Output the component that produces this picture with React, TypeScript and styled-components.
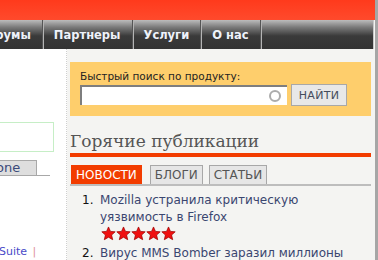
import React from 'react'
import styled, { createGlobalStyle } from 'styled-components'

const GlobalStyle = createGlobalStyle`
  html, body {
    margin: 0;
    padding: 0;
    background: #f4f4f2;
  }
  body {
    font-family: 'DejaVu Sans', Verdana, sans-serif;
  }
`

const navItems = ['Форумы', 'Партнеры', 'Услуги', 'О нас']
const tabs = ['Новости', 'Блоги', 'Статьи']

const Star = () => (
  <svg width="15" height="15" viewBox="0 0 24 24">
    <path
      d="M12 1.5l3.1 7.1 7.6.7-5.8 5.1 1.8 7.5L12 17.9l-6.7 4 1.8-7.5-5.8-5.1 7.6-.7z"
      fill="#f01010"
      stroke="#a00000"
      strokeWidth="1.2"
      strokeLinejoin="round"
    />
  </svg>
)

const App = () => {
  return (
    <>
      <GlobalStyle />
      <StyledPage>
        <StyledHeader />
        <StyledNav>
          {navItems.map((item, i) => (
            <StyledNavItem key={item} $first={i === 0}>
              {item}
            </StyledNavItem>
          ))}
        </StyledNav>
        <StyledContent>
          <StyledLeft>
            <StyledGreenBox />
            <StyledTabLine>
              <StyledSmallTab>one</StyledSmallTab>
            </StyledTabLine>
            <StyledSuite>
              Suite <span>|</span>
            </StyledSuite>
          </StyledLeft>
          <StyledMain>
            <StyledSearch>
              <StyledLabel>Быстрый поиск по продукту:</StyledLabel>
              <StyledSearchRow>
                <StyledInputWrap>
                  <StyledInput type="text" />
                  <StyledRing />
                </StyledInputWrap>
                <StyledButton>НАЙТИ</StyledButton>
              </StyledSearchRow>
            </StyledSearch>
            <StyledTitle>Горячие публикации</StyledTitle>
            <StyledTabs>
              {tabs.map((t, i) => (
                <StyledTab key={t} $active={i === 0}>
                  {t}
                </StyledTab>
              ))}
            </StyledTabs>
            <StyledList>
              <StyledItem>
                <StyledNum>1.</StyledNum>
                <div>
                  <StyledLink>
                    Mozilla устранила критическую
                    <br />
                    уязвимость в Firefox
                  </StyledLink>
                  <StyledStars>
                    <Star />
                    <Star />
                    <Star />
                    <Star />
                    <Star />
                  </StyledStars>
                </div>
              </StyledItem>
              <StyledItem>
                <StyledNum>2.</StyledNum>
                <StyledLink>Вирус MMS Bomber заразил миллионы</StyledLink>
              </StyledItem>
            </StyledList>
          </StyledMain>
        </StyledContent>
      </StyledPage>
    </>
  )
}

const StyledPage = styled.div`
  width: 375px;
  height: 260px;
  border-right: 3px solid #a6a6a6;
  display: flex;
  flex-direction: column;
  overflow: hidden;
`

const StyledHeader = styled.div`
  height: 20px;
  flex-shrink: 0;
  background: linear-gradient(#ff3a1c, #ff4a2c);
`

const StyledNav = styled.div`
  height: 29px;
  flex-shrink: 0;
  display: flex;
  width: 374px;
  box-sizing: border-box;
  border-right: 1px solid #c8c8c8;
  background: linear-gradient(#bcbcbc 0%, #7a7a7a 25%, #3a3a3a 55%, #333 100%);
  overflow: hidden;
`

const StyledNavItem = styled.div<{ $first?: boolean }>`
  display: flex;
  align-items: center;
  padding: 0 12px 0 10px;
  margin-left: ${(p) => (p.$first ? '-34px' : '0')};
  border-right: 1px solid #b4b4b4;
  box-shadow: inset -1px 0 0 #555;
  color: #eef2fa;
  font-weight: bold;
  font-size: 11.5px;
  white-space: nowrap;
`

const StyledContent = styled.div`
  flex: 1;
  display: flex;
`

const StyledLeft = styled.div`
  width: 66px;
  flex-shrink: 0;
  background: #fff;
  border-right: 1px dotted #cfcfcf;
  display: flex;
  flex-direction: column;
`

const StyledGreenBox = styled.div`
  margin-top: 73px;
  width: 54px;
  height: 30px;
  box-sizing: border-box;
  border: 1px solid #c6eec6;
  border-left: none;
`

const StyledTabLine = styled.div`
  margin-top: 8px;
  width: 50px;
  border-bottom: 1px solid #a8a8a8;
  display: flex;
`

const StyledSmallTab = styled.div`
  width: 37px;
  height: 15px;
  box-sizing: border-box;
  background: #dedede;
  border: 1px solid #a8a8a8;
  border-left: none;
  border-bottom: none;
  color: #3a4a7a;
  font-size: 13px;
  line-height: 14px;
  text-indent: -4px;
`

const StyledSuite = styled.div`
  margin-top: 69px;
  font-size: 11px;
  color: #4a4ac8;
  text-indent: -1px;

  span {
    color: #e0909a;
    margin-left: 2px;
  }
`

const StyledMain = styled.div`
  flex: 1;
  background: #f4f4f2;
  padding: 13px 4px 0 3px;
  display: flex;
  flex-direction: column;
`

const StyledSearch = styled.div`
  background: #fece6c;
  height: 54px;
  box-sizing: border-box;
  padding: 8px 10px 0 10px;
`

const StyledLabel = styled.div`
  font-size: 10.5px;
  line-height: 12px;
  color: #222;
`

const StyledSearchRow = styled.div`
  margin-top: 2px;
  display: flex;
  align-items: center;
  gap: 4px;
`

const StyledInputWrap = styled.div`
  position: relative;
  width: 207px;
  height: 20px;
`

const StyledInput = styled.input`
  width: 100%;
  height: 100%;
  box-sizing: border-box;
  margin: 0;
  padding: 0 20px 0 3px;
  background: #fff;
  border: none;
  border-top: 2px solid #7e7e7e;
  border-left: 2px solid #7e7e7e;
  outline: none;
`

const StyledRing = styled.span`
  position: absolute;
  right: 6px;
  top: 5px;
  width: 8px;
  height: 8px;
  border: 2px solid #acacac;
  border-radius: 50%;
`

const StyledButton = styled.button`
  width: 56px;
  height: 22px;
  margin: 0;
  padding: 0;
  background: #e8e8e8;
  border: 1px solid #a8a8a8;
  color: #444c5c;
  font-family: 'DejaVu Sans', Verdana, sans-serif;
  font-size: 11px;
  letter-spacing: 0.3px;
`

const StyledTitle = styled.div`
  margin-top: 14px;
  font-family: 'DejaVu Serif', Georgia, serif;
  font-size: 17px;
  line-height: 22px;
  color: #555;
  padding-bottom: 1px;
  border-bottom: 4px solid #f23c00;
`

const StyledTabs = styled.div`
  margin-top: 8px;
  display: flex;
  gap: 6px;
  border-bottom: 2px solid #bdbdbd;
`

const StyledTab = styled.div<{ $active?: boolean }>`
  height: 19px;
  box-sizing: border-box;
  padding: 0 4px;
  margin-left: ${(p) => (p.$active ? '1px' : '0')};
  margin-right: ${(p) => (p.$active ? '2px' : '0')};
  display: flex;
  align-items: center;
  font-size: 12px;
  text-transform: uppercase;
  color: ${(p) => (p.$active ? '#fff' : '#555')};
  background: ${(p) => (p.$active ? '#f23c00' : '#e6e6e6')};
  border: 1px solid ${(p) => (p.$active ? '#f23c00' : '#a8a8a8')};
  border-bottom: none;
`

const StyledList = styled.div`
  margin-top: 6px;
  display: flex;
  flex-direction: column;
  gap: 4px;
`

const StyledItem = styled.div`
  display: flex;
  font-size: 12px;
  line-height: 17px;
`

const StyledNum = styled.div`
  width: 18px;
  padding-left: 12px;
  flex-shrink: 0;
  color: #111;
`

const StyledLink = styled.div`
  color: #3a4670;
  white-space: nowrap;
`

const StyledStars = styled.div`
  display: flex;
  margin-left: 1px;
`

export default React.memo(App)
